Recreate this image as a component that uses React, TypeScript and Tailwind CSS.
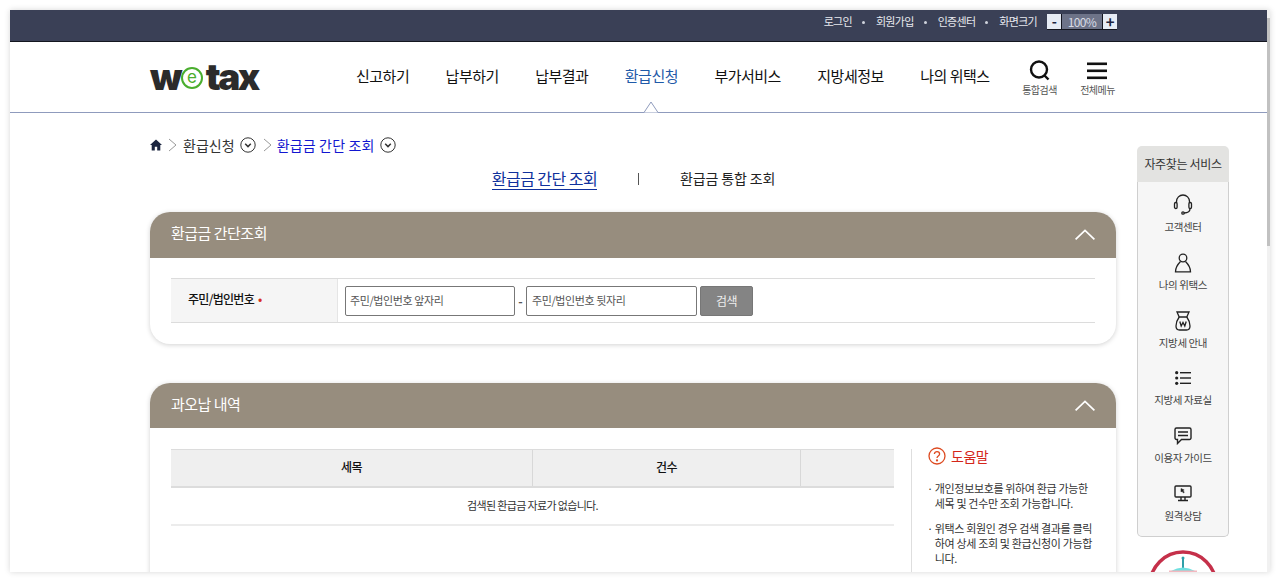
import React from "react";

function Chevron() {
  return (
    <svg width="20" height="11" viewBox="0 0 20 11" fill="none" stroke="#fff" strokeWidth="1.7" className="shrink-0 mb-[1px]">
      <path d="M0.6 10.4 L10 1.4 L19.4 10.4" />
    </svg>
  );
}

function CircleDown() {
  return (
    <svg width="16" height="16" viewBox="0 0 16 16" fill="none" stroke="#333" strokeWidth="1" className="shrink-0 block">
      <circle cx="8" cy="8" r="7.2" />
      <path d="M5.2 6.8 L8 9.6 L10.8 6.8" strokeWidth="1.5" />
    </svg>
  );
}

function Sep() {
  return (
    <svg width="9" height="14" viewBox="0 0 9 14" fill="none" stroke="#999" strokeWidth="1" className="shrink-0 block">
      <path d="M1 1 L8 7 L1 13" />
    </svg>
  );
}

function Dot() {
  return <span className="block shrink-0 w-[3px] h-[3px] rounded-full bg-[#cfd3dc]" />;
}

function PanelHead({ title, h }: { title: string; h: string }) {
  return (
    <div className={`${h} bg-[#978d7e] rounded-t-[20px] flex items-center justify-between pl-[21px] pr-[21px]`}>
      <span className="text-[15px] text-white tracking-[-0.5px] pb-[3px]">{title}</span>
      <Chevron />
    </div>
  );
}

const quick: { label: string; icon: React.ReactNode }[] = [
  {
    label: "고객센터",
    icon: (
      <svg width="20" height="22" viewBox="0 0 20 22" fill="none" stroke="#222" strokeWidth="1.3">
        <path d="M3.5 9 V7.5 a6.5 6.5 0 0 1 13 0 V9" />
        <rect x="1.5" y="8.5" width="2.6" height="6" rx="1.3" />
        <rect x="15.9" y="8.5" width="2.6" height="6" rx="1.3" />
        <path d="M17 14.5 c0 3 -2 4.5 -6 4.5" />
        <circle cx="10" cy="19" r="1.2" />
      </svg>
    ),
  },
  {
    label: "나의 위택스",
    icon: (
      <svg width="18" height="20" viewBox="0 0 18 20" fill="none" stroke="#222" strokeWidth="1.3">
        <circle cx="9" cy="5" r="3.8" />
        <path d="M6.5 8.5 C4 11 1.5 14 1.5 18.8 H16.5 C16.5 14 14 11 11.5 8.5" />
      </svg>
    ),
  },
  {
    label: "지방세 안내",
    icon: (
      <svg width="18" height="20" viewBox="0 0 18 20" fill="none" stroke="#222" strokeWidth="1.3">
        <path d="M3 1 H15 L12.8 6 H5.2 Z" />
        <path d="M5.2 6 C3 9 2 12 2 15 C2 18 3.5 19 5.5 19 H12.5 C14.5 19 16 18 16 15 C16 12 15 9 12.8 6" />
        <path d="M5.8 10.5 L7.2 15 L9 11.5 L10.8 15 L12.2 10.5" strokeWidth="1.3" />
      </svg>
    ),
  },
  {
    label: "지방세 자료실",
    icon: (
      <svg width="16" height="14" viewBox="0 0 16 14" fill="#222">
        <circle cx="1.7" cy="1.7" r="1.6" />
        <circle cx="1.7" cy="7" r="1.6" />
        <circle cx="1.7" cy="12.3" r="1.6" />
        <rect x="5" y="1" width="11" height="1.4" />
        <rect x="5" y="6.3" width="11" height="1.4" />
        <rect x="5" y="11.6" width="11" height="1.4" />
      </svg>
    ),
  },
  {
    label: "이용자 가이드",
    icon: (
      <svg width="18" height="18" viewBox="0 0 18 18" fill="none" stroke="#222" strokeWidth="1.4">
        <path d="M2.5 1 H15.5 A1.5 1.5 0 0 1 17 2.5 V11 A1.5 1.5 0 0 1 15.5 12.5 H7.5 L3.5 16.5 V12.5 H2.5 A1.5 1.5 0 0 1 1 11 V2.5 A1.5 1.5 0 0 1 2.5 1 Z" />
        <path d="M4 5 H14 M4 8.5 H14" />
      </svg>
    ),
  },
  {
    label: "원격상담",
    icon: (
      <svg width="18" height="17" viewBox="0 0 18 17" fill="none" stroke="#222" strokeWidth="1.4">
        <rect x="1" y="1" width="16" height="11" rx="1" />
        <path d="M7 12 V15 M11 12 V15 M4 15.5 H14" />
        <path d="M7 3.5 L7 7 L8 6.2 L9.5 8 L10.3 7.3 L8.9 5.5 L10.2 5 Z" fill="#222" strokeWidth="0.5" />
      </svg>
    ),
  },
];

const nav = ["신고하기", "납부하기", "납부결과", "환급신청", "부가서비스", "지방세정보", "나의 위택스"];

export default function App() {
  return (
    <div
      className="w-[1280px] h-[582px] overflow-hidden bg-white pt-[10px] pl-[10px] pr-[10px]"
      style={{ fontFamily: '"Noto Sans CJK KR", "Noto Sans", sans-serif' }}
    >
      <div className="flex h-[562px] w-[1260px] shadow-[0_0_6px_rgba(0,0,0,0.16)]">
        <div className="w-[1257px] h-[562px] overflow-hidden bg-white shrink-0">
          {/* Utility bar */}
          <div className="h-[32px] bg-[#3a4056] border-b border-[#14161f] flex justify-end items-start pt-[4px] pr-[150px] text-[11px] tracking-[-0.7px] text-[#e8e9ee]">
            <div className="flex items-center h-[16px] gap-[10px]">
              <span className="-mt-[2px]">로그인</span>
              <Dot />
              <span className="ml-[1px] -mt-[2px]">회원가입</span>
              <Dot />
              <span className="ml-[1px] -mt-[2px]">인증센터</span>
              <Dot />
              <span className="ml-[1px] -mt-[2px]">화면크기</span>
              <div className="flex h-[16px] border-b border-[#14161f] text-[12px] tracking-[-0.6px] leading-[15px] text-center">
                <span className="w-[15px] bg-[#e6ecf5] text-[#1c2340] font-bold text-[14px] border-r border-[#14161f]">-</span>
                <span className="w-[40px] bg-[#6d7388] text-[#d8dbe4]">100%</span>
                <span className="w-[15px] bg-[#e6ecf5] text-[#1c2340] font-bold text-[15px] border-l border-[#14161f]">+</span>
              </div>
            </div>
          </div>

          {/* Header */}
          <div className="relative h-[71px] border-b border-[#8f9bbd] flex items-start pl-[140px]">
            <div className="w-[110px] h-[50px] flex items-center mt-[9px] text-[37px] leading-none font-black tracking-[-2.6px] text-[#2b2b2b] shrink-0" style={{ fontFamily: "Inter, sans-serif" }}>
              <span>w</span>
              <span className="w-[22px] h-[22px] mt-[3px] ml-[1px] mr-[3px] shrink-0 rounded-full border-2 border-[#4aae2e] text-[#4aae2e] text-[17px] font-normal flex items-center justify-center tracking-normal">e</span>
              <span>tax</span>
            </div>
            <nav className="flex items-center h-[70px] ml-[96px] gap-[36.4px] pb-[1px] text-[15px] tracking-[-0.5px] text-[#111] shrink-0">
              {nav.map((n) => (
                <span key={n} className={n === "환급신청" ? "text-[#1f5aa8]" : ""}>{n}</span>
              ))}
            </nav>
            <div className="flex flex-col items-center w-[40px] ml-[30px] mt-[17px] shrink-0">
              <svg width="24" height="24" viewBox="0 0 24 24" fill="none" stroke="#111" strokeWidth="2.4" className="block">
                <circle cx="11" cy="10.5" r="8" />
                <path d="M16.5 16.5 L20.5 20.5" />
              </svg>
              <span className="text-[10px] tracking-[-0.5px] text-[#555] whitespace-nowrap leading-[14px]">통합검색</span>
            </div>
            <div className="flex flex-col items-center w-[40px] ml-[18px] mt-[17px] shrink-0">
              <svg width="24" height="24" viewBox="0 0 24 24" fill="#111" className="block -translate-x-[1px]">
                <rect x="2" y="3.5" width="20" height="2.6" />
                <rect x="2" y="10.5" width="20" height="2.6" />
                <rect x="2" y="17.5" width="20" height="2.6" />
              </svg>
              <span className="text-[10px] tracking-[-0.5px] text-[#555] whitespace-nowrap leading-[14px]">전체메뉴</span>
            </div>
            <svg className="absolute left-[632px] bottom-[-1px]" width="18" height="12" viewBox="0 0 18 12">
              <path d="M0 11.5 H2 L9 1 L16 11.5 H18" fill="#fff" stroke="#8f9bbd" strokeWidth="1" />
            </svg>
          </div>

          {/* Body */}
          <div className="flex items-start pl-[140px]">
            <main className="w-[966px] shrink-0">
              <div className="flex items-center h-[22px] mt-[21px] gap-[5px] text-[14px] tracking-[0.05px] text-[#333]">
                <svg width="12" height="12" viewBox="0 0 12 12" fill="#1c2640" className="shrink-0 block">
                  <path d="M6 0.5 L12 6 H10.3 V11.5 H7.2 V7.8 H4.8 V11.5 H1.7 V6 H0 Z" />
                </svg>
                <span className="ml-[1px]"><Sep /></span>
                <span className="ml-[1px]">환급신청</span>
                <CircleDown />
                <span className="ml-[2px]"><Sep /></span>
                <span className="text-[#1216d0] tracking-[0.15px]">환급금 간단 조회</span>
                <CircleDown />
              </div>

              <div className="flex items-center justify-center h-[26px] mt-[9px] pl-[1px] text-[14px] tracking-[-0.15px] text-[#222]">
                <span className="text-[#10319c] text-[16px] tracking-[-0.55px] border-b border-[#10319c] leading-[22px]">환급금 간단 조회</span>
                <span className="mx-[41px] mt-[1px] w-px h-[12px] bg-[#555]" />
                <span>환급금 통합 조회</span>
              </div>

              {/* Panel 1 */}
              <section className="mt-[21px] h-[132px] rounded-[20px] bg-white shadow-[0_1px_5px_rgba(0,0,0,0.18)]">
                <PanelHead title="환급금 간단조회" h="h-[46px]" />
                <div className="px-[21px] pt-[20px]">
                  <div className="flex h-[45px] border-y border-[#dcdcdc]">
                    <div className="w-[167px] bg-[#f5f5f5] border-r border-[#e5e5e5] flex items-center pl-[17px] pb-[3px] text-[12px] font-medium tracking-[-0.7px] text-[#111]">
                      주민/법인번호<span className="ml-[4px] text-[#d9301e]">•</span>
                    </div>
                    <div className="flex items-center pl-[7px]">
                      <div className="w-[170px] h-[30px] border border-[#777] rounded-[2px] flex items-center pl-[4px] text-[11px] tracking-[-0.4px] text-[#555]">주민/법인번호 앞자리</div>
                      <span className="w-[11px] text-center text-[12px] font-bold text-[#555]">-</span>
                      <div className="w-[171px] h-[30px] border border-[#777] rounded-[2px] flex items-center pl-[5px] text-[11px] tracking-[-0.4px] text-[#555]">주민/법인번호 뒷자리</div>
                      <div className="w-[53px] h-[30px] ml-[3px] bg-[#848484] border border-[#777] rounded-[2px] flex items-center justify-center text-[12px] text-[#eee] tracking-[-0.5px]">검색</div>
                    </div>
                  </div>
                </div>
              </section>

              {/* Panel 2 */}
              <section className="mt-[39px] h-[300px] rounded-[20px] bg-white shadow-[0_1px_5px_rgba(0,0,0,0.18)]">
                <PanelHead title="과오납 내역" h="h-[45px]" />
                <div className="flex pl-[21px] pt-[21px]">
                  <div className="w-[723px] shrink-0">
                    <div className="flex h-[39px] bg-[#efefef] border-t border-[#dcdcdc] border-b-2 border-b-[#dcdcdc] text-[12px] font-medium tracking-[-0.6px] text-[#111]">
                      <div className="w-[362px] flex items-center justify-center border-r border-[#d8d8d8] pb-[2px]">세목</div>
                      <div className="w-[268px] flex items-center justify-center border-r border-[#d8d8d8] pb-[2px]">건수</div>
                      <div className="flex-1" />
                    </div>
                    <div className="h-[38px] flex items-center justify-center pb-[2px] border-b-2 border-[#ececec] text-[11px] tracking-[-0.65px] text-[#333]">
                      검색된 환급금 자료가 없습니다.
                    </div>
                  </div>
                  <div className="ml-[17px] w-[185px] pl-[16px] border-l border-[#dedede] h-[200px] text-[11px] leading-[15px] tracking-[-0.35px] text-[#333]">
                    <div className="flex items-center h-[16px] mt-[-1px] gap-[5px] text-[#d4261a] text-[14px] tracking-[-0.5px]">
                      <svg width="18" height="18" viewBox="0 0 18 18" fill="none" stroke="#dd4a20" strokeWidth="1.3" className="shrink-0 block">
                        <circle cx="9" cy="9" r="8" />
                        <path d="M6.4 7 C6.4 3.8 11.6 3.8 11.6 7 C11.6 9 9 9 9 11" />
                        <circle cx="9" cy="13.4" r="0.5" />
                      </svg>
                      도움말
                    </div>
                    <div className="flex mt-[17px] gap-[2px] -ml-[1px]">
                      <span className="shrink-0">·</span>
                      <p>개인정보보호를 위하여 환급 가능한 세목 및 건수만 조회 가능합니다.</p>
                    </div>
                    <div className="flex mt-[10px] gap-[2px] -ml-[1px]">
                      <span className="shrink-0">·</span>
                      <p>위택스 회원인 경우 검색 결과를 클릭하여 상세 조회 및 환급신청이 가능합니다.</p>
                    </div>
                  </div>
                </div>
              </section>
            </main>

            {/* Quick menu */}
            <aside className="w-[92px] ml-[21px] mt-[33px] shrink-0">
              <div className="h-[36px] bg-[#e3e3e1] rounded-t-[5px] flex items-center justify-center text-[12px] tracking-[-0.35px] text-[#333]">자주찾는 서비스</div>
              <div className="h-[355px] bg-[#f6f6f6] border border-t-0 border-[#cfcfcf] rounded-b-[5px] pt-[11px] flex flex-col">
                {quick.map((q) => (
                  <div key={q.label} className="h-[57.8px] flex flex-col items-center shrink-0">
                    <div className="h-[24px] flex items-center justify-center">{q.icon}</div>
                    <span className="text-[10.5px] tracking-[-0.4px] text-[#444] mt-[3px] leading-[14px] whitespace-nowrap">{q.label}</span>
                  </div>
                ))}
              </div>
              <svg width="70" height="70" viewBox="0 0 70 70" className="block mt-[13px] mx-auto">
                <circle cx="35" cy="35" r="33" fill="#fff" stroke="#c5304a" strokeWidth="3.5" />
                <rect x="34" y="8" width="2" height="12" fill="#2f9fa8" />
                <circle cx="35" cy="8" r="1.5" fill="#2f9fa8" />
                <path d="M23 21 Q35 14 47 21 Z" fill="#6fe0e0" />
                <rect x="21" y="20.5" width="28" height="3" fill="#f3b8c0" />
              </svg>
            </aside>
          </div>
        </div>
        {/* Scrollbar */}
        <div className="w-[3px] h-[562px] bg-[#f1f1f1] shrink-0 pt-[8px]">
          <div className="h-[228px] bg-[#c1c1c1]" />
        </div>
      </div>
    </div>
  );
}
